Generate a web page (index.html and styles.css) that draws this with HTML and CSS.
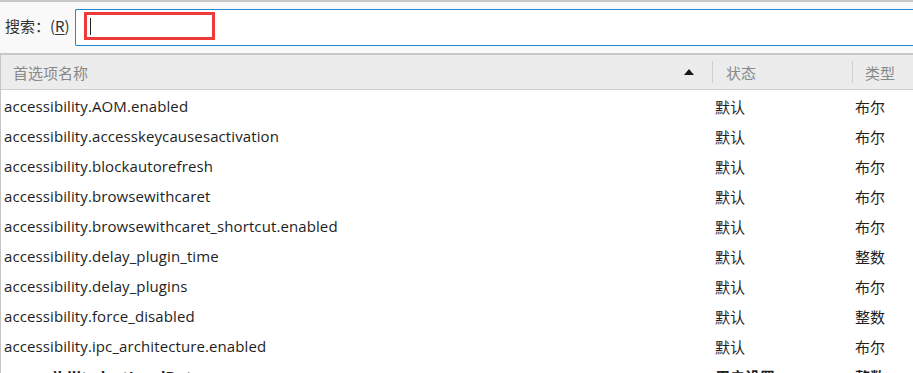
FILE: index.html
```html
<!DOCTYPE html>
<html lang="zh">
<head>
<meta charset="utf-8">
<link rel="stylesheet" href="styles.css">
</head>
<body>
<div class="top">
  <label class="search-label">搜索：(<u>R</u>)</label>
  <div class="search-box">
    <div class="highlight"><span class="caret"></span></div>
  </div>
</div>
<div class="table">
  <div class="thead">
    <div class="th th-name"><span>首选项名称</span><span class="arrow"></span></div>
    <div class="th th-status">状态</div>
    <div class="th th-type">类型</div>
  </div>
  <div class="row"><span class="c-name">accessibility.AOM.enabled</span><span class="c-status">默认</span><span class="c-type">布尔</span></div>
  <div class="row"><span class="c-name">accessibility.accesskeycausesactivation</span><span class="c-status">默认</span><span class="c-type">布尔</span></div>
  <div class="row"><span class="c-name">accessibility.blockautorefresh</span><span class="c-status">默认</span><span class="c-type">布尔</span></div>
  <div class="row"><span class="c-name">accessibility.browsewithcaret</span><span class="c-status">默认</span><span class="c-type">布尔</span></div>
  <div class="row"><span class="c-name">accessibility.browsewithcaret_shortcut.enabled</span><span class="c-status">默认</span><span class="c-type">布尔</span></div>
  <div class="row"><span class="c-name">accessibility.delay_plugin_time</span><span class="c-status">默认</span><span class="c-type">整数</span></div>
  <div class="row"><span class="c-name">accessibility.delay_plugins</span><span class="c-status">默认</span><span class="c-type">布尔</span></div>
  <div class="row"><span class="c-name">accessibility.force_disabled</span><span class="c-status">默认</span><span class="c-type">整数</span></div>
  <div class="row"><span class="c-name">accessibility.ipc_architecture.enabled</span><span class="c-status">默认</span><span class="c-type">布尔</span></div>
  <div class="row bold"><span class="c-name">accessibility.lastLoadDate</span><span class="c-status">用户设置</span><span class="c-type">整数</span></div>
</div>
</body>
</html>
```
FILE: styles.css
```css
html, body {
  margin: 0;
  padding: 0;
  background: #fff;
  overflow: hidden;
}
body {
  font-family: "Open Sans", "Noto Sans CJK SC", sans-serif;
  font-size: 15px;
  color: #1e1e1e;
  width: 913px;
  height: 373px;
}
.top {
  height: 53px;
  border-top: 2px solid #c8c8c8;
  background: #f9f9f9;
  display: flex;
  align-items: flex-start;
  padding-top: 7px;
  box-sizing: border-box;
}
.search-label {
  font-family: "Noto Sans CJK SC", sans-serif;
  font-size: 15px;
  color: #333;
  margin-left: 5px;
  margin-top: 6px;
  width: 70px;
  white-space: nowrap;
}
.search-label u {
  text-decoration: underline;
  text-underline-offset: 2px;
}
.search-box {
  flex: 1;
  height: 37px;
  box-sizing: border-box;
  border: 1px solid #1e88d4;
  border-right: none;
  border-radius: 2px 0 0 2px;
  background: #fff;
  padding: 2px 0 0 8px;
}
.highlight {
  width: 131px;
  height: 28px;
  box-sizing: border-box;
  border: 3px solid #ee3a3a;
  display: flex;
  align-items: center;
  padding-left: 3px;
}
.caret {
  width: 1px;
  height: 17px;
  background: #222;
}
.table {
  border-left: 1px solid #c4c4c4;
}
.thead {
  display: flex;
  height: 37px;
  box-sizing: border-box;
  background: #ececec;
  border-top: 2px solid #c8c8c8;
  border-bottom: 1px solid #cfcfcf;
  align-items: center;
  color: #888;
  font-family: "Noto Sans CJK SC", sans-serif;
  font-size: 15px;
}
.th {
  height: 22px;
  display: flex;
  align-items: center;
  box-sizing: border-box;
}
.th-name {
  width: 712px;
  padding-left: 12px;
  padding-right: 18px;
  justify-content: space-between;
  border-right: 1px solid #cfcfcf;
}
.arrow {
  width: 0;
  height: 0;
  border-left: 5px solid transparent;
  border-right: 5px solid transparent;
  border-bottom: 6px solid #1a1a1a;
}
.th-status {
  width: 140px;
  padding-left: 13px;
  border-right: 1px solid #cfcfcf;
}
.th-type {
  flex: 1;
  padding-left: 12px;
}
.row {
  display: flex;
  height: 30px;
  box-sizing: border-box;
  padding-top: 2px;
  align-items: center;
}
.c-name {
  width: 711px;
  padding-left: 3px;
  box-sizing: border-box;
  letter-spacing: 0.1px;
}
.c-status {
  width: 140px;
  padding-left: 3px;
  box-sizing: border-box;
  font-family: "Noto Sans CJK SC", sans-serif;
  font-size: 15px;
}
.c-type {
  flex: 1;
  padding-left: 3px;
  font-family: "Noto Sans CJK SC", sans-serif;
  font-size: 15px;
}
.bold {
  font-weight: bold;
}
```
